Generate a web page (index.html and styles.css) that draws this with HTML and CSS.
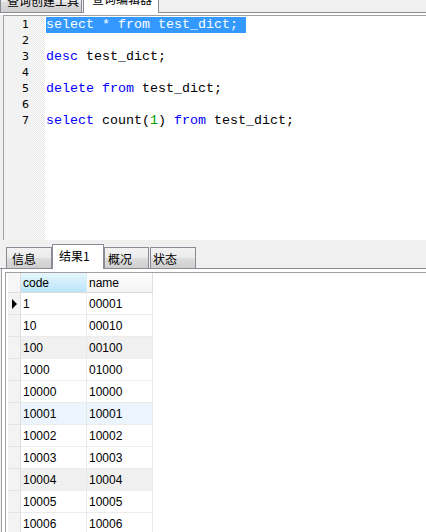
FILE: index.html
```html
<!DOCTYPE html>
<html>
<head>
<meta charset="utf-8">
<title>查询编辑器</title>
<link rel="stylesheet" href="styles.css">
</head>
<body>
<div class="app">
  <div class="tabstrip top">
    <div class="tab t-build">查询创建工具</div>
    <div class="tab active t-edit">查询编辑器</div>
  </div>
  <div class="editor-page">
    <div class="editor-frame">
      <div class="editor">
        <div class="gutter">
          <div class="ln">1</div>
          <div class="ln">2</div>
          <div class="ln">3</div>
          <div class="ln">4</div>
          <div class="ln">5</div>
          <div class="ln">6</div>
          <div class="ln">7</div>
        </div>
        <div class="fold"></div>
        <div class="code">
          <div class="line"><span class="sel">select * from test_dict; </span></div>
          <div class="line"></div>
          <div class="line"><span class="kw">desc</span> test_dict;</div>
          <div class="line"></div>
          <div class="line"><span class="kw">delete</span> <span class="kw">from</span> test_dict;</div>
          <div class="line"></div>
          <div class="line"><span class="kw">select</span> count(<span class="num">1</span>) <span class="kw">from</span> test_dict;</div>
        </div>
      </div>
    </div>
  </div>
  <div class="tabstrip bottom">
    <div class="tab b-info">信息</div>
    <div class="tab active b-res">结果1</div>
    <div class="tab b-over">概况</div>
    <div class="tab b-state">状态</div>
  </div>
  <div class="result-page">
    <div class="grid-frame">
      <div class="grid">
        <div class="grow head">
          <div class="rh"></div>
          <div class="cell sorted">code</div>
          <div class="cell">name</div>
        </div>
        <div class="grow">
          <div class="rh"><span class="pointer"></span></div>
          <div class="cell">1</div>
          <div class="cell">00001</div>
        </div>
        <div class="grow">
          <div class="rh"></div>
          <div class="cell">10</div>
          <div class="cell">00010</div>
        </div>
        <div class="grow alt">
          <div class="rh"></div>
          <div class="cell">100</div>
          <div class="cell">00100</div>
        </div>
        <div class="grow">
          <div class="rh"></div>
          <div class="cell">1000</div>
          <div class="cell">01000</div>
        </div>
        <div class="grow">
          <div class="rh"></div>
          <div class="cell">10000</div>
          <div class="cell">10000</div>
        </div>
        <div class="grow hover">
          <div class="rh"></div>
          <div class="cell">10001</div>
          <div class="cell">10001</div>
        </div>
        <div class="grow">
          <div class="rh"></div>
          <div class="cell">10002</div>
          <div class="cell">10002</div>
        </div>
        <div class="grow">
          <div class="rh"></div>
          <div class="cell">10003</div>
          <div class="cell">10003</div>
        </div>
        <div class="grow alt">
          <div class="rh"></div>
          <div class="cell">10004</div>
          <div class="cell">10004</div>
        </div>
        <div class="grow">
          <div class="rh"></div>
          <div class="cell">10005</div>
          <div class="cell">10005</div>
        </div>
        <div class="grow">
          <div class="rh"></div>
          <div class="cell">10006</div>
          <div class="cell">10006</div>
        </div>
      </div>
    </div>
  </div>
</div>
</body>
</html>
```

FILE: styles.css
```css
* {
  box-sizing: border-box;
}

html,
body {
  margin: 0;
  padding: 0;
}

body {
  background: #f0f0f0;
  font-family: "Liberation Sans", "Noto Sans CJK SC", sans-serif;
  font-size: 12px;
  color: #000;
}

.app {
  width: 426px;
  height: 532px;
  overflow: hidden;
  display: flex;
  flex-direction: column;
}

/* ---------- tab strips ---------- */
.tabstrip {
  flex: none;
  display: flex;
  align-items: flex-end;
  border-bottom: 1px solid #898c95;
  background: #f0f0f0;
}

.tabstrip.top {
  height: 13px;
}

.tabstrip.bottom {
  height: 29px;
  padding-left: 6px;
}

.tab {
  flex: none;
  height: 21px;
  border: 1px solid #898c95;
  border-bottom: none;
  background: linear-gradient(#f2f2f2 0%, #ebebeb 50%, #dddddd 50%, #cfcfcf 100%);
  font-family: "Noto Sans CJK SC", "Liberation Sans", sans-serif;
  font-size: 12px;
  line-height: 14px;
  display: flex;
  align-items: center;
  white-space: nowrap;
  padding-top: 1px;
}

.tab.active {
  height: 25px;
  margin-bottom: -1px;
  background: #fff;
  position: relative;
  z-index: 1;
  padding-top: 0;
  padding-bottom: 3px;
}

.top .tab {
  padding-top: 0;
  padding-bottom: 2px;
}

.top .tab.active {
  padding-bottom: 5px;
}

.t-build {
  width: 82px;
  padding-left: 6px;
}

.t-edit {
  width: 76px;
  margin-left: 1px;
  padding-left: 8px;
}

.b-info {
  width: 46px;
  padding-left: 5px;
}

.b-res {
  width: 52px;
  padding-left: 6px;
}

.b-over {
  width: 45px;
  padding-left: 3px;
}

.b-state {
  width: 46px;
  margin-left: 1px;
  padding-left: 2px;
}

/* ---------- editor ---------- */
.editor-page {
  flex: none;
  background: #fff;
  padding-top: 2px;
}

.editor-frame {
  background: #f0f0f0;
  padding-left: 3px;
}

.editor {
  height: 225px;
  border-top: 1px solid #a0a0a0;
  border-left: 1px solid #a0a0a0;
  background: #fff;
  display: flex;
}

.gutter {
  flex: none;
  width: 29px;
  background: #f2f2f2;
  padding-top: 1px;
  padding-right: 4px;
  text-align: right;
  font-family: "DejaVu Sans", "Liberation Sans", sans-serif;
  font-size: 11px;
}

.ln {
  height: 16px;
  line-height: 16px;
}

.fold {
  flex: none;
  width: 12px;
  background: repeating-conic-gradient(#e6e6e6 0 25%, #ffffff 0 50%) 0 0 / 2px 2px;
}

.code {
  flex: 1;
  padding-top: 1px;
  padding-left: 1px;
  font-family: "Liberation Mono", monospace;
  font-size: 13.333px;
}

.line {
  height: 16px;
  line-height: 16px;
  white-space: pre;
}

.sel {
  background: #3399ff;
  color: #fff;
  display: inline-block;
  height: 16px;
}

.kw {
  color: #0000ff;
}

.num {
  color: #00a000;
}

/* ---------- results ---------- */
.result-page {
  flex: 1;
  margin-left: 1px;
  border-left: 1px solid #a0a0a0;
  background: #fff;
  padding: 3px 0 0 3px;
}

.grid-frame {
  height: 100%;
  border-top: 1px solid #a0a0a0;
  border-left: 1px solid #a0a0a0;
  padding-left: 2px;
  background: #fff;
}

.grid {
  width: 145px;
}

.grow {
  display: grid;
  grid-template-columns: 13px 66px 66px;
  height: 22px;
}

.grow.head {
  height: 20px;
}

.rh {
  background: #f3f3f3;
  border-right: 1px solid #dedede;
  border-bottom: 1px solid #e4e4e4;
  display: flex;
  align-items: center;
  justify-content: center;
}

.cell {
  border-right: 1px solid #e8e8e8;
  border-bottom: 1px solid #ececec;
  padding-top: 1px;
  padding-left: 2px;
  line-height: 20px;
  white-space: nowrap;
  overflow: hidden;
}

.head .cell {
  padding-top: 2px;
  line-height: 17px;
  background: linear-gradient(#ffffff, #f2f2f2);
  border-right: 1px solid #e0e0e0;
  border-bottom: 1px solid #dcdcdc;
}

.head .cell.sorted {
  background: linear-gradient(#e6f6fd, #bbe5f9);
  border-right-color: #d6eef9;
}

.head .rh {
  background: #f6f6f6;
  border-bottom-color: #dcdcdc;
}

.alt .cell {
  background: #f0f0f0;
}

.hover .cell {
  background: #ecf5fd;
}

.pointer {
  width: 0;
  height: 0;
  border-top: 5px solid transparent;
  border-bottom: 5px solid transparent;
  border-left: 5px solid #000;
}
```
